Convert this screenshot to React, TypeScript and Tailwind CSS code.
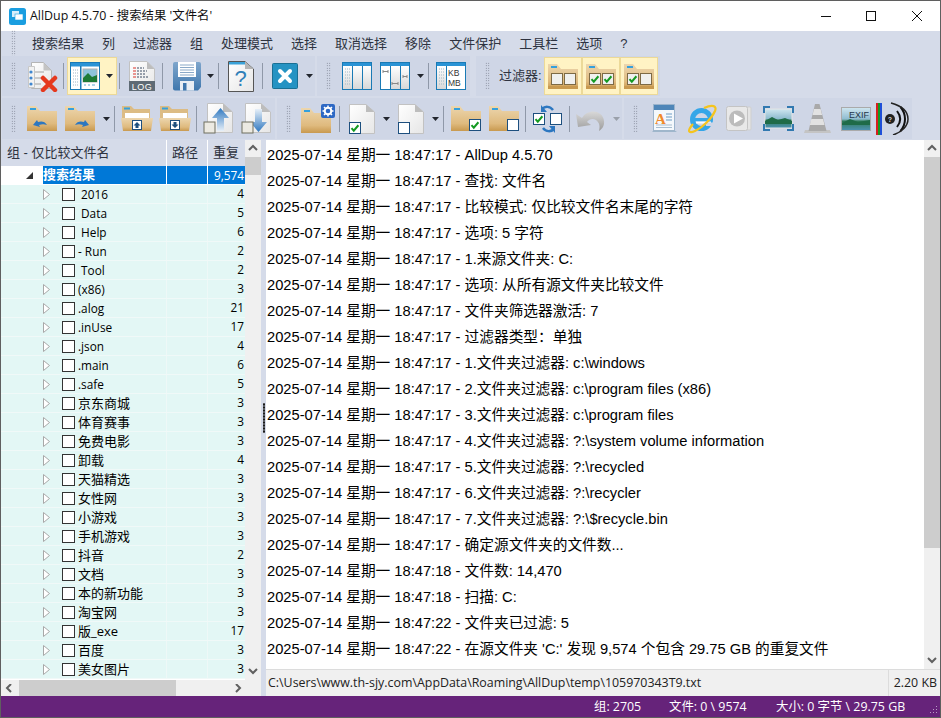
import React from "react";

const Defs = () => (
  <svg width="0" height="0" className="absolute">
    <defs>
      <linearGradient id="tan" x1="0" y1="0" x2="0" y2="1">
        <stop offset="0" stopColor="#ecd6ae" />
        <stop offset="0.7" stopColor="#dfba7e" />
        <stop offset="1" stopColor="#c8994f" />
      </linearGradient>
      <linearGradient id="paper" x1="0" y1="0" x2="1" y2="1">
        <stop offset="0" stopColor="#ffffff" />
        <stop offset="1" stopColor="#e6e6e6" />
      </linearGradient>
      <linearGradient id="arrowb" x1="0" y1="0" x2="0" y2="1">
        <stop offset="0" stopColor="#2f78c0" />
        <stop offset="1" stopColor="#e6eff8" />
      </linearGradient>
      <linearGradient id="arrowd" x1="0" y1="0" x2="0" y2="1">
        <stop offset="0" stopColor="#e6eff8" />
        <stop offset="1" stopColor="#2f78c0" />
      </linearGradient>
      <linearGradient id="colg" x1="0" y1="0" x2="0" y2="1">
        <stop offset="0" stopColor="#ffffff" />
        <stop offset="1" stopColor="#d8d8d8" />
      </linearGradient>
      <linearGradient id="sky" x1="0" y1="0" x2="0" y2="1">
        <stop offset="0" stopColor="#cfe6f0" />
        <stop offset="0.5" stopColor="#8fbcd0" />
        <stop offset="0.6" stopColor="#2f7a58" />
        <stop offset="1" stopColor="#4f93b5" />
      </linearGradient>
      <linearGradient id="floppy" x1="0" y1="0" x2="0" y2="1">
        <stop offset="0" stopColor="#7fa6cc" />
        <stop offset="1" stopColor="#3f77ad" />
      </linearGradient>
      <linearGradient id="gray" x1="0" y1="0" x2="0" y2="1">
        <stop offset="0" stopColor="#d8d8d8" />
        <stop offset="1" stopColor="#9c9c9c" />
      </linearGradient>
    </defs>
  </svg>
);

const Grip = () => (
  <div className="w-[22px] h-full flex justify-center items-center shrink-0">
    <div className="w-[5px] h-[28px] bg-[radial-gradient(#6f7585_0.7px,transparent_0.8px)] bg-[length:2.5px_2.5px]" />
  </div>
);

const Sep = ({ c = "" }: { c?: string }) => (
  <div className={`w-px h-[26px] bg-[#8f98a8] shrink-0 ${c}`} />
);

const Caret = ({ c = "", light = false }: { c?: string; light?: boolean }) => (
  <svg width="7" height="4" viewBox="0 0 7 4" className={`shrink-0 ${c}`}>
    <path d="M0 0h7L3.5 4z" fill={light ? "#9aa0aa" : "#22262e"} />
  </svg>
);

const Check = ({ x, y, s = 11, on = true, light = false }: { x: number; y: number; s?: number; on?: boolean; light?: boolean }) => (
  <g>
    <rect x={x + 0.5} y={y + 0.5} width={s} height={s} fill={light ? "#f0f0ee" : "#fff"} stroke={light ? "#7d6a45" : "#1d4f7e"} />
    {on && (
      <path
        d={`M${x + 2.5} ${y + s * 0.55}l2.3 2.6 4.6-5.4`}
        fill="none"
        stroke="#149a22"
        strokeWidth="2"
      />
    )}
  </g>
);

const FolderShape = () => (
  <g>
    <path d="M0 1h9l4 5h17v20H0z" fill="url(#tan)" />
    <rect x="3" y="3" width="6" height="2" fill="#35a0dc" />
  </g>
);

const Folder = ({ children }: { children?: React.ReactNode }) => (
  <svg width="31" height="27" viewBox="0 0 31 27" className="shrink-0">
    <FolderShape />
    {children}
  </svg>
);

const FolderOpen = ({ down }: { down?: boolean }) => (
  <svg width="32" height="27" viewBox="0 0 32 27" className="shrink-0">
    <path d="M1 1h9l3 3h16v12H1z" fill="#dcbc85" />
    <rect x="3" y="2.500" width="6" height="2" fill="#35a0dc" />
    <rect x="4" y="8" width="24" height="6" fill="#fff" />
    <path d="M0 13h32l-2 13H2z" fill="url(#tan)" />
    <rect x="11.500" y="15.500" width="9" height="9" fill="#fff" stroke="#1d4f7e" />
    <path d={down ? "M14.500 17h3v2.500h2l-3.500 3.500-3.500-3.500h2z" : "M14.500 23h3v-2.500h2l-3.500-3.500-3.500 3.500h2z"} fill="#1d4f7e" />
  </svg>
);

const ListDel = () => (
  <svg width="32" height="31" viewBox="0 0 32 31" className="shrink-0">
    <path d="M4.500 1.500h12l8 8v18h-20z" fill="url(#paper)" stroke="#b5b5b5" />
    <path d="M16.500 1.500v8h8z" fill="#c4c4c4" />
    <path d="M1.500 5.500h6v21h-6z" fill="#f2f2f2" stroke="#c8c8c8" />
    <circle cx="4" cy="11" r="1.600" fill="#3f86cf" />
    <circle cx="4" cy="17" r="1.600" fill="#3f86cf" />
    <circle cx="4" cy="23" r="1.600" fill="#3f86cf" />
    <path d="M8 11h9M8 17h8M8 23h6" stroke="#a0a0a0" />
    <path d="M16 17l12 12M28 17l-12 12" stroke="#e5391e" strokeWidth="4.500" strokeLinecap="round" />
  </svg>
);

const Layout = () => (
  <svg width="30" height="28" viewBox="0 0 30 28" className="shrink-0">
    <rect x="0.500" y="0.500" width="29" height="27" fill="#fff" stroke="#1a7ab5" />
    <rect x="1" y="1" width="28" height="3.500" fill="#2a93d5" />
    <rect x="10" y="4" width="1.500" height="23" fill="#1a7ab5" />
    <path d="M3 8h5M3 11h5M3 14h5M3 17h5M3 20h5M3 23h5" stroke="#9fb7c7" strokeDasharray="1 1" />
    <rect x="13" y="7" width="14" height="13" fill="#8fc4dc" stroke="#b0b0b0" />
    <path d="M13 16l5-5 4 4 5-2v7H13z" fill="#1e7a36" />
    <path d="M14 23h2M18 23h2M22 23h3" stroke="#5fa7d4" />
  </svg>
);

const Log = () => (
  <svg width="26" height="30" viewBox="0 0 26 30" className="shrink-0">
    <path d="M0.500 0.500H18L25.500 8V29.500H0.500z" fill="url(#paper)" stroke="#c2c2c2" />
    <path d="M18 0.500V8H25.500z" fill="#bdbdbd" />
    <path d="M8 7h7M8 10h10M8 13h9M8 16h12" stroke="#3b4b63" strokeDasharray="2 1" />
    <path d="M4 7h3M4 10h3M4 13h3M4 16h3" stroke="#d8332a" />
    <rect x="0" y="20" width="26" height="10" fill="#5e6a74" />
    <text x="13" y="28.500" textAnchor="middle" fontSize="9" letterSpacing="0.500" fill="#fff" fontFamily="Liberation Sans">LOG</text>
  </svg>
);

const Save = () => (
  <svg width="28" height="29" viewBox="0 0 28 29" className="shrink-0">
    <path d="M0 2a2 2 0 012-2h24a2 2 0 012 2v23l-3 3.500H2a2 2 0 01-2-2z" fill="url(#floppy)" />
    <rect x="5" y="0" width="18" height="15" fill="#fff" />
    <path d="M7 3h14M7 5.500h14M7 8h14M7 10.500h14M7 13h14" stroke="#8ba9c8" />
    <rect x="7" y="19" width="14" height="9.500" fill="#e9eef4" />
    <rect x="10" y="21" width="3.500" height="7.500" fill="#3f77ad" />
  </svg>
);

const Help = () => (
  <svg width="26" height="31" viewBox="0 0 26 31" className="shrink-0">
    <path d="M0.500 0.500H17L25.500 8V30.500H0.500z" fill="url(#paper)" stroke="#555" />
    <path d="M17 0.500V8H25.500z" fill="#b5b5b5" />
    <rect x="1" y="1" width="16" height="2.500" fill="#3aa2d8" />
    <text x="12.500" y="25" textAnchor="middle" fontSize="22" fill="#2f7fb8" fontFamily="Liberation Sans">?</text>
  </svg>
);

const XBtn = () => (
  <svg width="26" height="26" viewBox="0 0 26 26" className="shrink-0">
    <rect x="0.500" y="0.500" width="25" height="25" rx="1" fill="#2593c3" stroke="#1a6f93" />
    <path d="M8 8l10 10M18 8L8 18" stroke="#fff" strokeWidth="4" strokeLinecap="round" />
  </svg>
);

const Cols = ({ sizes, kb }: { sizes?: boolean; kb?: boolean }) => (
  <svg width="30" height="28" viewBox="0 0 30 28" className="shrink-0">
    <rect x="0.500" y="0.500" width="29" height="27" fill="#fff" stroke="#1a7ab5" />
    <rect x="1" y="1" width="28" height="3" fill="#2a93d5" />
    {!kb && <rect x="10" y="4" width="10" height="23" fill="url(#colg)" />}
    {!kb && <rect x="21" y="4" width="8" height="23" fill="url(#colg)" />}
    {!kb && !sizes && <rect x="1" y="4" width="9" height="23" fill="url(#colg)" />}
    {kb && <rect x="1" y="4" width="9" height="23" fill="url(#colg)" />}
    <rect x="10" y="4" width="1" height="23" fill="#1a7ab5" />
    {!kb && <rect x="20" y="4" width="1" height="23" fill="#1a7ab5" />}
    {!sizes && <path d="M3 7h5M3 10h5M3 13h5M3 16h5M3 19h5M3 22h5" stroke="#9fb7c7" strokeDasharray="1 1" />}
    {sizes && <path d="M3 9.500h5M3 8v3M8 8v3M12 21.500h6M12 20v3M18 20v3M23 14.500h4M23 13v3M27 13v3" stroke="#888" />}
    {kb && <text x="12" y="14" fontSize="8.500" fill="#333" fontFamily="Liberation Sans">KB</text>}
    {kb && <text x="12" y="24" fontSize="8.500" fill="#333" fontFamily="Liberation Sans">MB</text>}
  </svg>
);

const FilterBtn = ({ a, b }: { a: boolean; b: boolean }) => (
  <div className="w-[38px] h-[38px] shrink-0 flex items-center justify-center bg-[#fff3c4] border border-[#ecd998]">
    <svg width="30" height="26" viewBox="0 0 30 26">
      <FolderShape />
      <rect x="0" y="23" width="30" height="3" fill="#c8994f" />
      <Check x={3} y={10} on={a} light />
      <Check x={16} y={10} on={b} light />
    </svg>
  </div>
);

const FileMove = ({ down }: { down?: boolean }) => (
  <svg width="30" height="31" viewBox="0 0 30 31" className="shrink-0">
    <path d="M4.500 0.500H20L29.500 9V29.500H4.500z" fill="url(#paper)" stroke="#c2c2c2" />
    <path d="M20 0.500V9H29.500z" fill="#bdbdbd" />
    {down ? (
      <path d="M14 6h7v13h5l-8.500 10L9 19h5z" fill="url(#arrowd)" />
    ) : (
      <path d="M14 28h7V15h5L17.500 5 9 15h5z" fill="url(#arrowb)" />
    )}
    <rect x="1" y="19" width="11" height="11" fill="#eceae2" stroke="#6f6f5f" />
  </svg>
);

const FileCheck = ({ on }: { on: boolean }) => (
  <svg width="26" height="30" viewBox="0 0 26 30" className="shrink-0">
    <path d="M0.500 0.500H17L25.500 8V29.500H0.500z" fill="url(#paper)" stroke="#c2c2c2" />
    <path d="M17 0.500V8H25.500z" fill="#bdbdbd" />
    <Check x={0} y={18} on={on} />
  </svg>
);

const Swap = () => (
  <svg width="30" height="32" viewBox="0 0 30 32" className="shrink-0">
    <path d="M20 7C17 3 12 3 9 6" fill="none" stroke="#2d77c0" strokeWidth="2.500" />
    <path d="M8 2v7h6z" fill="#2d77c0" />
    <path d="M10 25c3 4 8 4 11 1" fill="none" stroke="#2d77c0" strokeWidth="2.500" />
    <path d="M22 30v-7h-6z" fill="#2d77c0" />
    <Check x={0} y={10} />
    <Check x={17} y={10} on={false} />
  </svg>
);

const Undo = () => (
  <svg width="31" height="29" viewBox="0 0 31 29" className="shrink-0">
    <path d="M6 14c6-10 21-8 22 3 .6 5-2 8-5 10 1-4 1-8-3-11-3-2-7-1-9 2l4 3-13 2-2-13z" fill="url(#gray)" />
  </svg>
);

const AdocIcon = () => (
  <svg width="26" height="29" viewBox="0 0 26 29" className="shrink-0">
    <rect x="1.500" y="0.500" width="21" height="27" fill="#f4f8fc" stroke="#9cb4cc" />
    <rect x="2" y="1" width="20" height="5" fill="#4f86b8" />
    <text x="3" y="20" fontSize="15" fontWeight="bold" fill="#f08a2c" fontFamily="Liberation Serif">A</text>
    <path d="M14 10h6M14 13h6M14 16h6" stroke="#6c9cc4" />
    <path d="M4 21h16M4 23.500h16" stroke="#a8bdd0" />
    <path d="M0 28l2-2h20l3 2z" fill="#9fb6cb" />
  </svg>
);

const IE = () => (
  <svg width="30" height="30" viewBox="0 0 30 30" className="shrink-0">
    <circle cx="14.500" cy="15.500" r="9" fill="none" stroke="#35a6e8" strokeWidth="5" />
    <rect x="8" y="14" width="15" height="3.500" fill="#35a6e8" />
    <rect x="9" y="17.500" width="15" height="2" fill="#fff" opacity="0.900" />
    <rect x="19" y="18.500" width="11" height="3.500" fill="#cfd6e6" />
    <path d="M6 20C0 27 1 30 8 27c8-3.500 17-13 20-20 2-5-2-7-11-3" fill="none" stroke="#f4c41e" strokeWidth="2.200" />
  </svg>
);

const Play = () => (
  <svg width="26" height="25" viewBox="0 0 26 25" className="shrink-0">
    <rect x="5" y="1" width="20" height="23" rx="1" fill="#e4e4e4" stroke="#cfcfcf" />
    <rect x="0.500" y="0.500" width="21" height="24" rx="2" fill="#e8e8e8" stroke="#c4c4c4" />
    <circle cx="11" cy="12.500" r="8" fill="#bcbcbc" />
    <path d="M8 7.500l9 5-9 5z" fill="#fff" />
  </svg>
);

const ImgFit = () => (
  <svg width="31" height="25" viewBox="0 0 31 25" className="shrink-0">
    <rect x="2" y="3" width="27" height="19" fill="url(#sky)" stroke="#e4e4e4" />
    <path d="M2 15l7-4 6 3 7-2 7 3v3H2z" fill="#1f6b48" />
    <path d="M0.500 7V0.500H7M24 0.500h6.500V7M30.500 18v6.500H24M7 24.500H0.500V18" fill="none" stroke="#3279b0" strokeWidth="3" />
  </svg>
);

const Cone = () => (
  <svg width="27" height="30" viewBox="0 0 27 30" className="shrink-0">
    <path d="M1 26h25l1 3H0z" fill="#c4c4c4" />
    <path d="M11 0h4.500l7 27h-18z" fill="#a9a9a9" />
    <path d="M10 5h6.600l1.500 6H8.500zM7.300 15h11.800l1.400 6H5.800z" fill="#e2e2e2" />
  </svg>
);

const Exif = () => (
  <svg width="30" height="24" viewBox="0 0 30 24" className="shrink-0">
    <rect x="0.500" y="0.500" width="29" height="23" fill="url(#sky)" stroke="#aaa" />
    <path d="M1 16l8-4 8 3 12-2v5H1z" fill="#1f6b48" />
    <text x="8" y="11" fontSize="9" fill="#25364a" fontFamily="Liberation Sans">EXIF</text>
  </svg>
);

const Sound = () => (
  <svg width="33" height="33" viewBox="0 0 33 33" className="shrink-0">
    <rect x="0" y="1" width="2" height="32" fill="#d81f1f" />
    <rect x="2" y="1" width="2" height="32" fill="#149a22" />
    <rect x="4" y="1" width="2" height="32" fill="#1f4fd8" />
    <circle cx="14" cy="17" r="5" fill="#222" />
    <text x="14" y="20" textAnchor="middle" fontSize="7" fontWeight="bold" fill="#ddd" fontFamily="Liberation Sans">?</text>
    <path d="M21 9c4 5 4 11 0 16M24.500 5c6 7 6 17 0 24" fill="none" stroke="#111" strokeWidth="2" />
    <path d="M15 1c11 3 17 9 17 16s-6 13-15 16" fill="none" stroke="#222" strokeWidth="1.500" />
  </svg>
);

const Band = ({ w, children }: { w: string; children: React.ReactNode }) => (
  <div className={`${w} h-full bg-[#cfd6e6] flex items-center shrink-0`}>{children}</div>
);

const menu = ["搜索结果", "列", "过滤器", "组", "处理模式", "选择", "取消选择", "移除", "文件保护", "工具栏", "选项", "?"];

const logs: [string, string][] = [
  ["18:47:17", "AllDup 4.5.70"],
  ["18:47:17", "查找: 文件名"],
  ["18:47:17", "比较模式: 仅比较文件名末尾的字符"],
  ["18:47:17", "选项: 5 字符"],
  ["18:47:17", "1.来源文件夹: C:"],
  ["18:47:17", "选项: 从所有源文件夹比较文件"],
  ["18:47:17", "文件夹筛选器激活: 7"],
  ["18:47:17", "过滤器类型：单独"],
  ["18:47:17", "1.文件夹过滤器: c:\\windows"],
  ["18:47:17", "2.文件夹过滤器: c:\\program files (x86)"],
  ["18:47:17", "3.文件夹过滤器: c:\\program files"],
  ["18:47:17", "4.文件夹过滤器: ?:\\system volume information"],
  ["18:47:17", "5.文件夹过滤器: ?:\\recycled"],
  ["18:47:17", "6.文件夹过滤器: ?:\\recycler"],
  ["18:47:17", "7.文件夹过滤器: ?:\\$recycle.bin"],
  ["18:47:17", "确定源文件夹的文件数..."],
  ["18:47:18", "文件数: 14,470"],
  ["18:47:18", "扫描: C:"],
  ["18:47:22", "文件夹已过滤: 5"],
  ["18:47:22", "在源文件夹 'C:' 发现 9,574 个包含 29.75 GB 的重复文件"],
];

const rows: [string, number][] = [
  ["\u00a02016", 4], ["\u00a0Data", 5], ["\u00a0Help", 6], ["- Run", 2], ["\u00a0Tool", 2], ["(x86)", 3],
  [".alog", 21], [".inUse", 17], [".json", 4], [".main", 6], [".safe", 5],
  ["京东商城", 3], ["体育赛事", 3], ["免费电影", 3], ["卸载", 4], ["天猫精选", 3], ["女性网", 3], ["小游戏", 3],
  ["手机游戏", 3], ["抖音", 2], ["文档", 3], ["本的新功能", 3], ["淘宝网", 3], ["版_exe", 17], ["百度", 3], ["美女图片", 3],
];

const Chevron = ({ dir, c = "" }: { dir: "up" | "down" | "left" | "right"; c?: string }) => {
  const d = { up: "M1 6l4-4 4 4", down: "M1 2l4 4 4-4", left: "M6 0l-4 4 4 4", right: "M3 0l4 4-4 4" }[dir];
  return (
    <svg width="10" height="9" viewBox="0 0 10 9" className={`shrink-0 ${c}`}>
      <path d={d} fill="none" stroke="#606060" strokeWidth="2" />
    </svg>
  );
};

export default function App() {
  return (
    <div className="w-[941px] h-[718px] flex flex-col border border-[#5f5f5f] bg-[#d5dbe9] overflow-hidden text-black font-['Liberation_Sans','Noto_Sans_CJK_SC',sans-serif]">
      <Defs />
      {/* title bar */}
      <div className="h-[30px] bg-white flex items-center shrink-0">
        <svg width="17" height="17" viewBox="0 0 17 17" className="ml-[8px] shrink-0">
          <rect width="17" height="17" rx="2.500" fill="#1a9ee0" />
          <rect x="3" y="3" width="7" height="6" fill="#d8eefa" />
          <rect x="6" y="6" width="8" height="6" fill="#fff" stroke="#1a9ee0" strokeWidth="0.600" />
        </svg>
        <span className="ml-[4px] text-[12.4px] leading-none text-[#111] font-['Open_Sans','Noto_Sans_CJK_SC',sans-serif] whitespace-pre">AllDup 4.5.70 - 搜索结果 '文件名'</span>
        <div className="ml-auto flex items-center">
          <svg width="12" height="12" viewBox="0 0 12 12" className="mr-[33px]"><path d="M1 6.500h10" stroke="#111" /></svg>
          <svg width="12" height="12" viewBox="0 0 12 12" className="mr-[34px]"><rect x="1.500" y="1.500" width="9" height="9" fill="none" stroke="#111" /></svg>
          <svg width="12" height="12" viewBox="0 0 12 12" className="mr-[17px]"><path d="M1 1l10 10M11 1L1 11" stroke="#111" /></svg>
        </div>
      </div>

      {/* menu */}
      <div className="h-[25px] flex items-center shrink-0">
        <div className="ml-[1px]"><Grip /></div>
        <div className="w-[8px]" />
        <div className="flex gap-[18px] text-[13px] text-[#2e3340]">
          {menu.map((m) => (
            <span key={m}>{m}</span>
          ))}
        </div>
      </div>

      {/* toolbar row 1 */}
      <div className="h-[40px] flex gap-[2px] pl-[1px] shrink-0">
        <Band w="w-[313px]">
          <Grip />
          <div className="ml-[3px]"><ListDel /></div>
          <Sep c="ml-[4px]" />
          <div className="ml-[3px] w-[50px] h-[38px] bg-[#fff3c4] border border-[#ecd998] flex items-center shrink-0">
            <div className="ml-[2px]"><Layout /></div>
            <Caret c="ml-[6px]" />
          </div>
          <Sep c="ml-[2px]" />
          <div className="ml-[9px]"><Log /></div>
          <Sep c="ml-[7px]" />
          <div className="ml-[10px]"><Save /></div>
          <Caret c="ml-[6px]" />
          <Sep c="ml-[4px]" />
          <div className="ml-[9px]"><Help /></div>
          <Sep c="ml-[8px]" />
          <div className="ml-[9px]"><XBtn /></div>
          <Caret c="ml-[8px]" />
        </Band>
        <Band w="w-[153px]">
          <Grip />
          <div className="ml-[3px]"><Cols /></div>
          <div className="ml-[8px]"><Cols sizes /></div>
          <Caret c="ml-[7px]" />
          <Sep c="ml-[4px]" />
          <div className="ml-[7px]"><Cols kb /></div>
        </Band>
        <div className="w-[2px]" />
        <Band w="w-[184px]">
          <Grip />
          <span className="ml-[1px] w-[45px] text-[13px] text-[#2e3340] shrink-0">过滤器:</span>
          <FilterBtn a={false} b={false} />
          <FilterBtn a b />
          <FilterBtn a b={false} />
        </Band>
      </div>
      <div className="h-[2px] shrink-0" />

      {/* toolbar row 2 */}
      <div className="h-[41px] flex gap-[2px] pl-[1px] shrink-0">
        <Band w="w-[273px]">
          <Grip />
          <div className="ml-[3px]">
            <Folder>
              <path d="M20 20c-2-4-6-4-9-3l-1-2-4 5 7 2-1-2c3-1 5-1 8 0z" fill="#2d77c0" />
            </Folder>
          </div>
          <div className="ml-[7px]">
            <Folder>
              <path d="M10 20c2-4 6-4 9-3l1-2 4 5-7 2 1-2c-3-1-5-1-8 0z" fill="#2d77c0" />
            </Folder>
          </div>
          <Caret c="ml-[7px]" />
          <Sep c="ml-[4px]" />
          <div className="ml-[6px]"><FolderOpen /></div>
          <div className="ml-[6px]"><FolderOpen down /></div>
          <Sep c="ml-[5px]" />
          <div className="ml-[6px]"><FileMove /></div>
          <div className="ml-[8px]"><FileMove down /></div>
        </Band>
        <Band w="w-[345px]">
          <Grip />
          <div className="ml-[2px] relative w-[34px] h-[30px] shrink-0 flex items-end">
            <Folder />
            <svg width="14" height="14" viewBox="0 0 14 14" className="absolute right-0 top-0">
              <rect width="14" height="14" rx="2" fill="#2d68c4" />
              <circle cx="7" cy="7" r="3.300" fill="none" stroke="#fff" strokeWidth="2" />
              <path d="M7 1.500v2M7 10.500v2M1.500 7h2M10.500 7h2M3 3l1.500 1.500M9.500 9.500L11 11M11 3L9.500 4.500M4.500 9.500L3 11" stroke="#fff" strokeWidth="1.500" />
            </svg>
          </div>
          <Sep c="ml-[4px]" />
          <div className="ml-[9px]"><FileCheck on /></div>
          <Caret c="ml-[8px]" />
          <div className="ml-[8px]"><FileCheck on={false} /></div>
          <Caret c="ml-[8px]" />
          <Sep c="ml-[4px]" />
          <div className="ml-[7px]">
            <Folder><Check x={18} y={14} /></Folder>
          </div>
          <div className="ml-[7px]">
            <Folder><Check x={18} y={14} on={false} /></Folder>
          </div>
          <Sep c="ml-[5px]" />
          <div className="ml-[7px]"><Swap /></div>
          <Sep c="ml-[6px]" />
          <div className="ml-[6px]"><Undo /></div>
          <Caret light c="ml-[6px]" />
        </Band>
        <Band w="w-[288px]">
          <Grip />
          <div className="ml-[6px]"><AdocIcon /></div>
          <div className="ml-[9px]"><IE /></div>
          <div className="ml-[9px]"><Play /></div>
          <div className="ml-[11px]"><ImgFit /></div>
          <div className="ml-[10px]"><Cone /></div>
          <div className="ml-[10px]"><Exif /></div>
          <div className="ml-[5px]"><Sound /></div>
        </Band>
      </div>
      <div className="h-px shrink-0" />

      {/* body */}
      <div className="flex-1 min-h-0 flex">
        {/* tree */}
        <div className="w-[260px] flex flex-col shrink-0">
          <div className="flex-1 min-h-0 flex">
            <div className="w-[244px] flex flex-col bg-white">
              <div className="h-[26px] flex bg-[#d5dbe9] text-[13px] text-[#2e3340] shrink-0 leading-[26px]">
                <div className="w-[166px] pl-[6px] border-r border-white">组 - 仅比较文件名</div>
                <div className="w-[41px] pl-[5px] border-r border-white">路径</div>
                <div className="flex-1 pl-[5px] whitespace-nowrap">重复</div>
              </div>
              <div className="h-[19px] flex shrink-0 border-b border-white">
                <div className="w-[42px] flex items-center pl-[25px]">
                  <svg width="7" height="7" viewBox="0 0 7 7"><path d="M7 0v7H0z" fill="#333" /></svg>
                </div>
                <div className="flex-1 flex bg-[#0078d7] text-white">
                  <div className="w-[124px] border-r border-white text-[13px] font-bold leading-[18px]">搜索结果</div>
                  <div className="w-[41px] border-r border-white" />
                  <div className="flex-1 text-right text-[11.8px] pr-[1px] leading-[18px] font-['Open_Sans',sans-serif]">9,574</div>
                </div>
              </div>
              {rows.map(([name, n]) => {
                const cjk = /[\u4e00-\u9fff]/.test(name);
                return (
                  <div key={name} className="h-[19px] flex bg-[#e3f7f5] border-b border-[#f0f9f8] shrink-0 font-['Open_Sans','Noto_Sans_CJK_SC',sans-serif]">
                    <div className="w-[166px] flex items-center border-r border-[#eef8f7]">
                      <svg width="7" height="11" viewBox="0 0 7 11" className="ml-[42px] shrink-0">
                        <path d="M0.500 0.500v10l6-5z" fill="#fff" stroke="#a8a8a8" />
                      </svg>
                      <div className="ml-[12px] w-[13px] h-[13px] border border-[#333] bg-white shrink-0" />
                      <span className={`ml-[3px] pt-[2px] whitespace-pre ${cjk ? "text-[13px]" : "text-[11.8px]"}`}>{name}</span>
                    </div>
                    <div className="w-[41px] border-r border-[#eef8f7]" />
                    <div className="flex-1 text-right text-[11.8px] pr-[1px] leading-[17px]">{n}</div>
                  </div>
                );
              })}
            </div>
            <div className="w-[16px] bg-[#f0f0f0] flex flex-col items-center shrink-0">
              <Chevron dir="up" c="mt-[4px]" />
              <div className="mt-[4px] w-full h-[18px] bg-[#cdcdcd]" />
              <div className="flex-1" />
              <Chevron dir="down" c="mb-[4px]" />
            </div>
          </div>
          <div className="h-[16px] bg-[#f0f0f0] flex items-center shrink-0">
            <Chevron dir="left" c="ml-[4px]" />
            <div className="ml-[4px] w-[157px] h-full bg-[#cdcdcd]" />
            <Chevron dir="right" c="ml-[57px]" />
          </div>
        </div>

        {/* splitter */}
        <div className="w-[5px] flex items-center justify-end pr-px shrink-0 bg-[#d5dbe9]">
          <div className="w-[2px] h-[30px] bg-[radial-gradient(#1a1a1a_0.8px,transparent_0.9px)] bg-[length:2px_3px]" />
        </div>

        {/* log */}
        <div className="flex-1 min-w-0 flex flex-col">
          <div className="flex-1 min-h-0 flex">
            <div className="flex-1 bg-white pt-[2px] pl-px text-[14.7px] text-black overflow-hidden">
              {logs.map(([t, s], i) => (
                <div key={i} className="h-[26px] leading-[26px] whitespace-pre">{`2025-07-14 星期一 ${t} - ${s}`}</div>
              ))}
            </div>
            <div className="w-[16px] bg-[#f0f0f0] flex flex-col items-center shrink-0">
              <Chevron dir="up" c="mt-[4px]" />
              <div className="mt-[4px] w-full h-[391px] bg-[#cdcdcd]" />
              <div className="flex-1" />
              <Chevron dir="down" c="mb-[4px]" />
            </div>
          </div>
          <div className="h-[27px] bg-[#f0f0f0] border-t border-[#dcdcdc] flex items-center text-[12.4px] text-[#222] shrink-0 font-['Open_Sans',sans-serif]">
            <div className="flex-1 pl-[2px] whitespace-nowrap">C:\Users\www.th-sjy.com\AppData\Roaming\AllDup\temp\105970343T9.txt</div>
            <div className="w-[52px] h-full border-l border-[#dcdcdc] flex items-center justify-end pr-[3px] whitespace-nowrap">2.20 KB</div>
          </div>
        </div>
      </div>

      {/* status */}
      <div className="h-[21px] bg-[#66237a] text-white text-[12.4px] flex items-center shrink-0 relative font-['Open_Sans','Noto_Sans_CJK_SC',sans-serif]">
        <span className="ml-[593px] w-[75px] pt-px">组: 2705</span>
        <span className="w-[107px] pt-px">文件: 0 \ 9574</span>
        <span className="whitespace-nowrap pt-px">大小: 0 字节 \ 29.75 GB</span>
        <svg width="10" height="10" viewBox="0 0 10 10" className="absolute right-[2px] bottom-[2px]">
          <path d="M8 1h1v1H8zM5 4h1v1H5zM8 4h1v1H8zM2 7h1v1H2zM5 7h1v1H5zM8 7h1v1H8z" fill="#b99cc4" />
        </svg>
      </div>
    </div>
  );
}
